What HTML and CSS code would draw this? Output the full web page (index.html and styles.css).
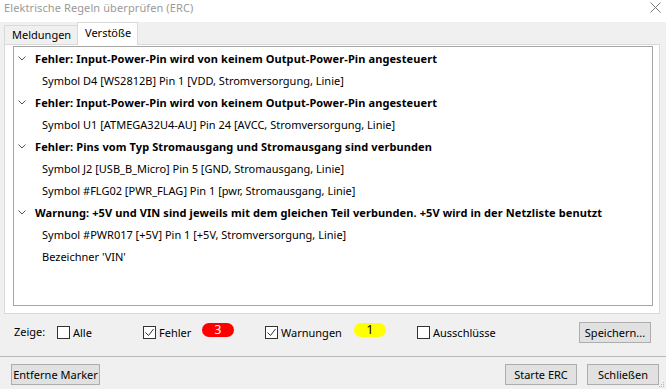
FILE: index.html
```html
<!DOCTYPE html>
<html lang="de">
<head>
    <meta charset="UTF-8">
    <title>Elektrische Regeln überprüfen (ERC)</title>
    <link rel="stylesheet" href="styles.css">
</head>
<body>
    <!-- Titelleiste -->
    <div class="titlebar">
        <span class="title">Elektrische Regeln überprüfen (ERC)</span>
        <svg class="close" width="11" height="11" viewBox="0 0 11 11">
            <path d="M0.5 0.5 L10.5 10.5 M10.5 0.5 L0.5 10.5" stroke="#7a7a7a" stroke-width="1" fill="none"/>
        </svg>
    </div>

    <div class="dialog">
        <div class="tabs">
            <div class="tab">Meldungen</div>
            <div class="tab active">Verstöße</div>
        </div>

        <div class="tabpage">
            <div class="tree">
                <div class="row head">
                    <svg class="chev" width="8" height="5" viewBox="0 0 8 5"><path d="M0.5 0.5 L4 4 L7.5 0.5" stroke="#555" fill="none"/></svg>
                    Fehler: Input-Power-Pin wird von keinem Output-Power-Pin angesteuert
                </div>
                <div class="row item">Symbol D4 [WS2812B] Pin 1 [VDD, Stromversorgung, Linie]</div>

                <div class="row head">
                    <svg class="chev" width="8" height="5" viewBox="0 0 8 5"><path d="M0.5 0.5 L4 4 L7.5 0.5" stroke="#555" fill="none"/></svg>
                    Fehler: Input-Power-Pin wird von keinem Output-Power-Pin angesteuert
                </div>
                <div class="row item">Symbol U1 [ATMEGA32U4-AU] Pin 24 [AVCC, Stromversorgung, Linie]</div>

                <div class="row head">
                    <svg class="chev" width="8" height="5" viewBox="0 0 8 5"><path d="M0.5 0.5 L4 4 L7.5 0.5" stroke="#555" fill="none"/></svg>
                    Fehler: Pins vom Typ Stromausgang und Stromausgang sind verbunden
                </div>
                <div class="row item">Symbol J2 [USB_B_Micro] Pin 5 [GND, Stromausgang, Linie]</div>
                <div class="row item">Symbol #FLG02 [PWR_FLAG] Pin 1 [pwr, Stromausgang, Linie]</div>

                <div class="row head">
                    <svg class="chev" width="8" height="5" viewBox="0 0 8 5"><path d="M0.5 0.5 L4 4 L7.5 0.5" stroke="#555" fill="none"/></svg>
                    Warnung: +5V und VIN sind jeweils mit dem gleichen Teil verbunden. +5V wird in der Netzliste benutzt
                </div>
                <div class="row item">Symbol #PWR017 [+5V] Pin 1 [+5V, Stromversorgung, Linie]</div>
                <div class="row item">Bezeichner 'VIN'</div>
            </div>
        </div>

        <!-- Filter -->
        <div class="filters">
            <span class="zeige">Zeige:</span>
            <label class="check check-all">
                <span class="box"></span>Alle
            </label>
            <label class="check check-err">
                <span class="box"><svg width="11" height="11" viewBox="0 0 11 11"><path d="M1.5 5.5 L4.5 8.5 L9.5 2" stroke="#333" fill="none"/></svg></span>Fehler
            </label>
            <span class="pill red">3</span>
            <label class="check check-warn">
                <span class="box"><svg width="11" height="11" viewBox="0 0 11 11"><path d="M1.5 5.5 L4.5 8.5 L9.5 2" stroke="#333" fill="none"/></svg></span>Warnungen
            </label>
            <span class="pill yellow">1</span>
            <label class="check">
                <span class="box"></span>Ausschlüsse
            </label>
            <button class="btn save">Speichern...</button>
        </div>

        <div class="footer">
            <button class="btn wide">Entferne Marker</button>
            <button class="btn push">Starte ERC</button>
            <button class="btn">Schließen</button>
        </div>

        <svg class="grip" width="6" height="6" viewBox="0 0 6 6">
            <rect x="4" y="0" width="1" height="1" fill="#b5b5b5"/>
            <rect x="2" y="2" width="1" height="1" fill="#b5b5b5"/>
            <rect x="4" y="2" width="1" height="1" fill="#b5b5b5"/>
            <rect x="0" y="4" width="1" height="1" fill="#b5b5b5"/>
            <rect x="2" y="4" width="1" height="1" fill="#b5b5b5"/>
            <rect x="4" y="4" width="1" height="1" fill="#b5b5b5"/>
        </svg>
    </div>
</body>
</html>
```

FILE: styles.css
```css
/* Grundstil */
body {
    margin: 0;
    width: 666px;
    height: 389px;
    overflow: hidden;
    font-family: "Noto Sans", sans-serif;
    font-size: 11px;
    color: #000;
    background-color: #fff;
}
.titlebar {
    height: 22px;
    display: flex;
    align-items: center;
    padding-left: 4px;
    background-color: #fff;
}
.title {
    color: #9a9a9a;
    font-size: 11px;
    letter-spacing: 0.1px;
    margin-top: -7px;
}
.close {
    margin-left: auto;
    margin-right: 5px;
    margin-top: -7px;
}
.dialog {
    position: relative;
    height: 367px;
    background-color: #f0f0f0;
}

/* Reiter */
.tabs {
    height: 22px;
    display: flex;
    align-items: flex-end;
    padding-left: 4px;
}
.tab {
    box-sizing: border-box;
    height: 19px;
    width: 73px;
    padding-left: 7px;
    line-height: 17px;
    border: 1px solid #d9d9d9;
    border-bottom: none;
    border-right: none;
    background-color: #f0f0f0;
}
.tab.active {
    position: relative;
    z-index: 1;
    width: 61px;
    height: 23px;
    margin-bottom: -1px;
    line-height: 19px;
    border-right: 1px solid #d9d9d9;
    background-color: #fff;
}
.tabpage {
    box-sizing: border-box;
    height: 270px;
    margin: 0 6px 0 4px;
    padding: 1px 6px 7px 8px;
    border: 1px solid #d9d9d9;
    background-color: #fff;
}
.tree {
    box-sizing: border-box;
    height: 260px;
    border: 1px solid #a5a5a5;
    background-color: #fff;
}
.row {
    height: 22px;
    display: flex;
    align-items: center;
    white-space: nowrap;
}
.row.head {
    padding-left: 4px;
    font-weight: bold;
    letter-spacing: 0.1px;
}
.chev {
    margin-right: 9px;
    margin-top: 1px;
}
.row.item {
    padding-left: 28px;
}

/* Filterzeile */
.filters {
    height: 36px;
    display: flex;
    align-items: center;
    padding: 0 15px 0 14px;
    margin-bottom: 6px;
}
.zeige {
    width: 43px;
    margin-top: -2px;
}
.check {
    display: flex;
    align-items: center;
}
.check-all {
    width: 86px;
}
.check-err {
    width: 59px;
}
.check-warn {
    width: 89px;
}
.box {
    box-sizing: border-box;
    width: 13px;
    height: 13px;
    margin-right: 3px;
    border: 1px solid #333;
    background-color: #fff;
    display: flex;
}
.pill {
    width: 32px;
    height: 14px;
    margin-right: 31px;
    border-radius: 7px;
    text-align: center;
    line-height: 14px;
    font-size: 12px;
    margin-top: -4px;
}
.pill.red {
    background-color: #ff0000;
    color: #fff;
}
.pill.yellow {
    background-color: #ffff00;
    color: #000;
}
.btn {
    box-sizing: border-box;
    width: 72px;
    height: 21px;
    padding: 0;
    border: 1px solid #adadad;
    background-color: #e1e1e1;
    font-family: "Noto Sans", sans-serif;
    font-size: 11px;
    color: #000;
}
.btn.save {
    margin-left: auto;
}

/* Untere Knöpfe */
.footer {
    display: flex;
    gap: 10px;
    padding: 7px 7px 0 11px;
    border-top: 1px solid #b9b9b9;
}
.btn.wide {
    width: 89px;
}
.btn.push {
    margin-left: auto;
}
.grip {
    position: absolute;
    right: 1px;
    bottom: 1px;
}
```
